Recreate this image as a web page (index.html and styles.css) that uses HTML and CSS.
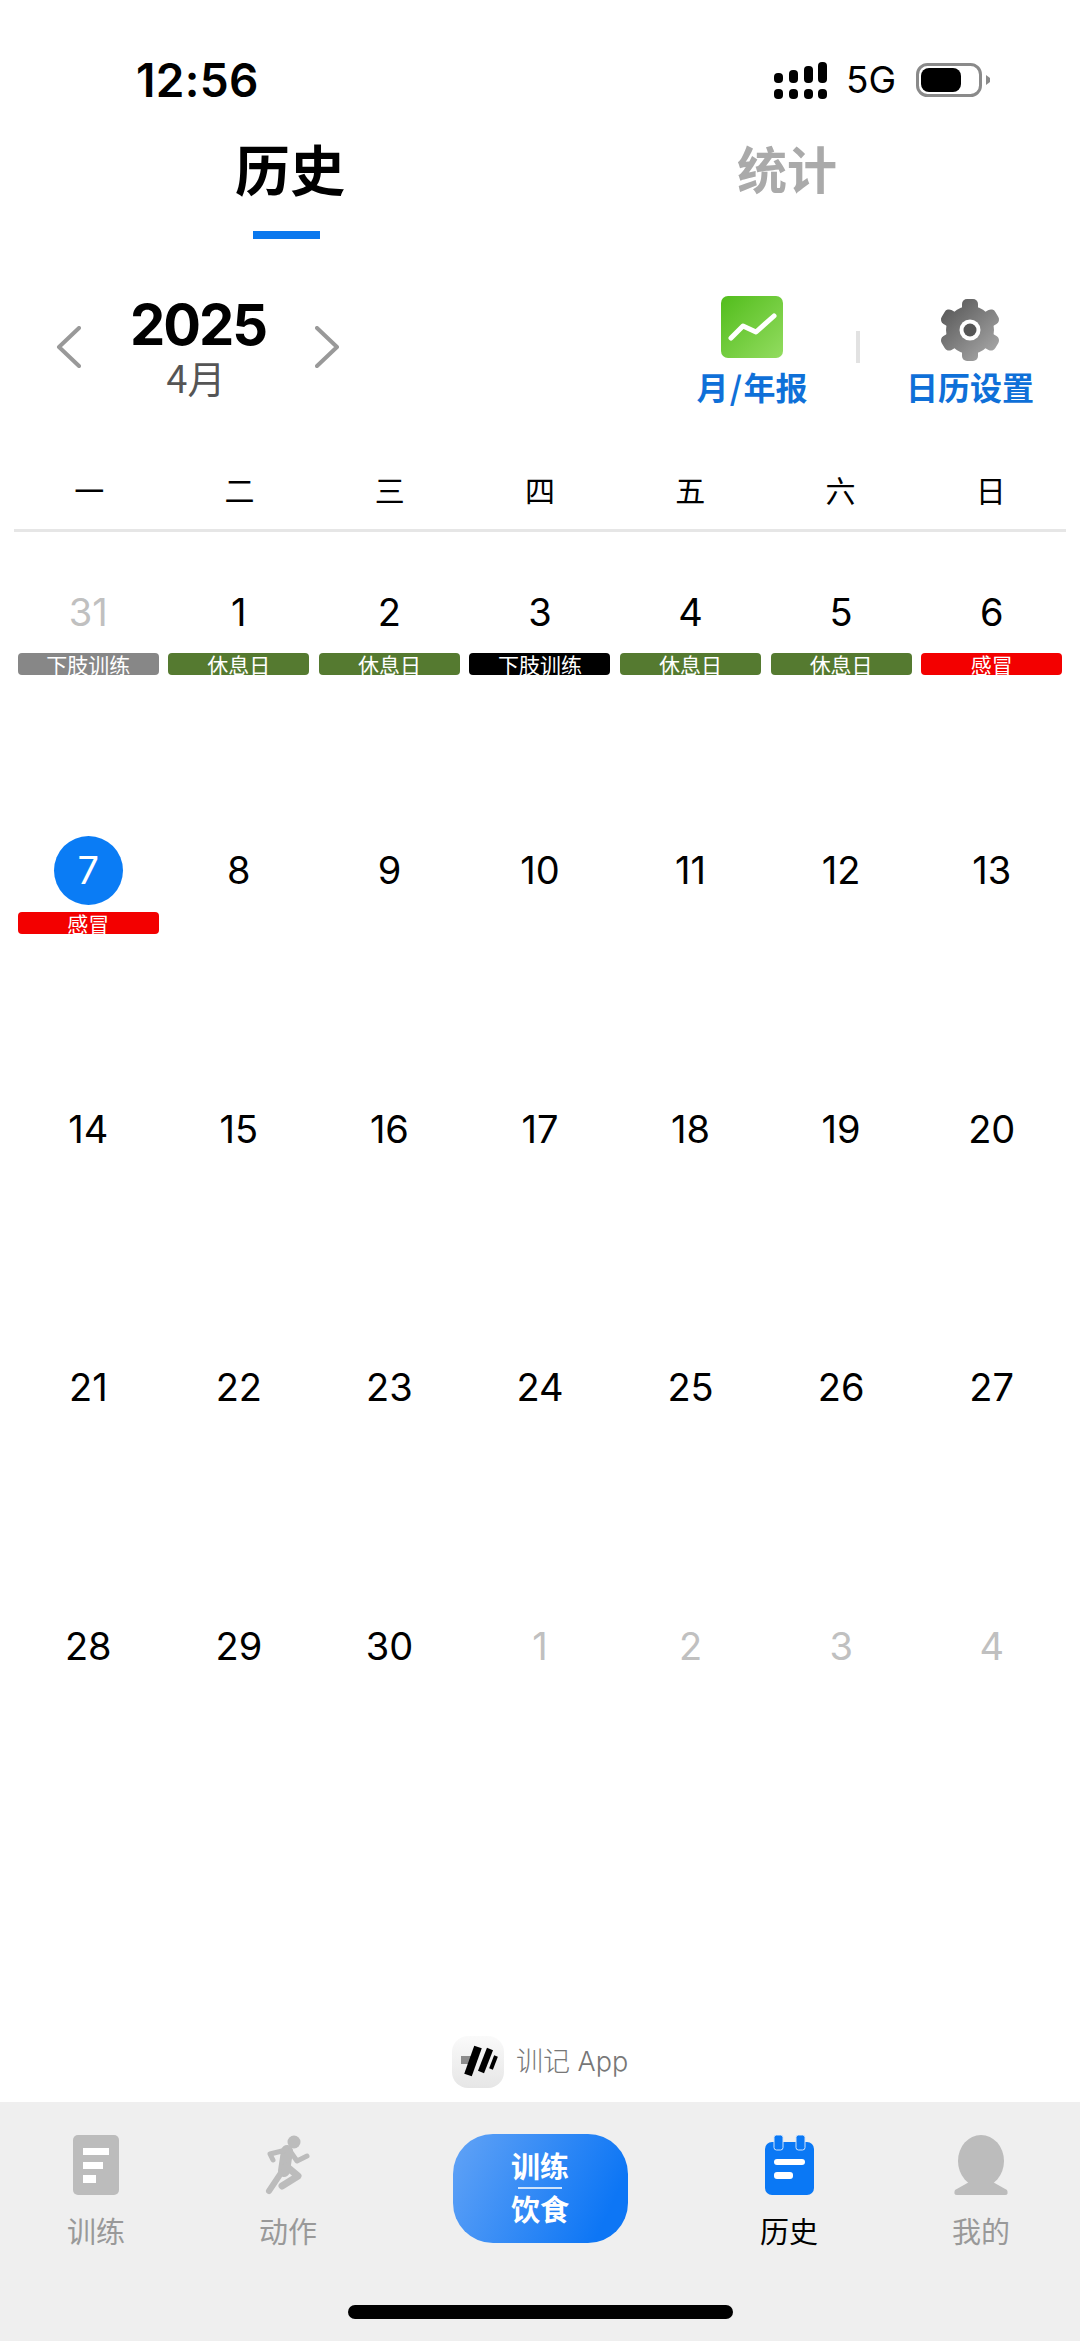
FILE: index.html
```html
<!DOCTYPE html>
<html lang="zh-CN">
<head>
<meta charset="utf-8">
<title>历史</title>
<link rel="stylesheet" href="styles.css">
</head>
<body>
<div class="app">
  <header class="status">
    <span class="time">12:56</span>
    <div class="status-right">
      <svg class="signal" width="53" height="37" viewBox="0 0 53 37" fill="#000">
        <rect x="0" y="11" width="9" height="10" rx="4"/><rect x="15" y="8" width="9" height="13" rx="4"/><rect x="30" y="4" width="9" height="17" rx="4"/><rect x="44" y="0" width="9" height="21" rx="4"/>
        <rect x="0" y="27" width="9" height="10" rx="4"/><rect x="15" y="27" width="9" height="10" rx="4"/><rect x="30" y="27" width="9" height="10" rx="4"/><rect x="44" y="27" width="9" height="10" rx="4"/>
      </svg>
      <span class="net">5G</span>
      <svg class="battery" width="74" height="34" viewBox="0 0 74 34">
        <rect x="1.5" y="1.5" width="63" height="31" rx="10" fill="#fff" stroke="#8a8a8a" stroke-width="3"/>
        <rect x="5" y="5" width="40" height="24" rx="8" fill="#000"/>
        <path d="M70 12 L74 15 V19 L70 22 Z" fill="#8a8a8a"/>
      </svg>
    </div>
  </header>

  <nav class="tabs">
    <div class="tab tab-active"><span class="tab-label">历史</span><span class="tab-line"></span></div>
    <div class="tab tab-idle"><span class="tab-label">统计</span></div>
  </nav>

  <section class="toolbar">
    <div class="month-nav">
      <svg class="chev" width="25" height="42" viewBox="0 0 25 42"><path d="M23 2 L3 21 L23 40" /></svg>
      <div class="month-label"><span class="year">2025</span><span class="month">4月</span></div>
      <svg class="chev" width="25" height="42" viewBox="0 0 25 42"><path d="M2 2 L22 21 L2 40" /></svg>
    </div>
    <div class="actions">
      <div class="action action-report">
        <svg width="62" height="62" viewBox="0 0 62 62">
          <defs><linearGradient id="g1" x1="0" y1="0" x2="1" y2="1"><stop offset="0" stop-color="#52bd1c"/><stop offset="1" stop-color="#93dc60"/></linearGradient></defs>
          <rect width="62" height="62" rx="7" fill="url(#g1)"/>
          <path d="M10 42 L22 30 L35 36 L53 20" fill="none" stroke="#fff" stroke-width="5" stroke-linecap="round" stroke-linejoin="round"/>
        </svg>
        <span class="action-text">月 / 年报</span>
      </div>
      <span class="vsep"></span>
      <div class="action action-set">
        <svg width="62" height="62" viewBox="0 0 62 62">
          <defs>
            <linearGradient id="g2" x1="0" y1="0" x2="1" y2="1"><stop offset="0" stop-color="#4f4f4f"/><stop offset="1" stop-color="#b0b0b0"/></linearGradient>
            <mask id="gear">
              <circle cx="31" cy="31" r="24" fill="#fff"/>
              <g fill="#fff">
                <rect x="23" y="0" width="16" height="62" rx="5"/>
                <rect x="23" y="0" width="16" height="62" rx="5" transform="rotate(60 31 31)"/>
                <rect x="23" y="0" width="16" height="62" rx="5" transform="rotate(120 31 31)"/>
              </g>
            </mask>
          </defs>
          <rect width="62" height="62" fill="url(#g2)" mask="url(#gear)"/>
          <circle cx="31" cy="31" r="10.5" fill="#fff"/>
          <circle cx="31" cy="31" r="6.5" fill="#555"/>
        </svg>
        <span class="action-text">日历设置</span>
      </div>
    </div>
  </section>

  <div class="weekdays">
    <span>一</span><span>二</span><span>三</span><span>四</span><span>五</span><span>六</span><span>日</span>
  </div>

  <main class="calendar">
    <div class="day"><span class="num other">31</span><span class="pill p-grey">下肢训练</span></div>
    <div class="day"><span class="num">1</span><span class="pill p-green">休息日</span></div>
    <div class="day"><span class="num">2</span><span class="pill p-green">休息日</span></div>
    <div class="day"><span class="num">3</span><span class="pill p-black">下肢训练</span></div>
    <div class="day"><span class="num">4</span><span class="pill p-green">休息日</span></div>
    <div class="day"><span class="num">5</span><span class="pill p-green">休息日</span></div>
    <div class="day"><span class="num">6</span><span class="pill p-red">感冒</span></div>

    <div class="day"><span class="num today">7</span><span class="pill p-red">感冒</span></div>
    <div class="day"><span class="num">8</span></div>
    <div class="day"><span class="num">9</span></div>
    <div class="day"><span class="num">10</span></div>
    <div class="day"><span class="num">11</span></div>
    <div class="day"><span class="num">12</span></div>
    <div class="day"><span class="num">13</span></div>

    <div class="day"><span class="num">14</span></div>
    <div class="day"><span class="num">15</span></div>
    <div class="day"><span class="num">16</span></div>
    <div class="day"><span class="num">17</span></div>
    <div class="day"><span class="num">18</span></div>
    <div class="day"><span class="num">19</span></div>
    <div class="day"><span class="num">20</span></div>

    <div class="day"><span class="num">21</span></div>
    <div class="day"><span class="num">22</span></div>
    <div class="day"><span class="num">23</span></div>
    <div class="day"><span class="num">24</span></div>
    <div class="day"><span class="num">25</span></div>
    <div class="day"><span class="num">26</span></div>
    <div class="day"><span class="num">27</span></div>

    <div class="day"><span class="num">28</span></div>
    <div class="day"><span class="num">29</span></div>
    <div class="day"><span class="num">30</span></div>
    <div class="day"><span class="num other">1</span></div>
    <div class="day"><span class="num other">2</span></div>
    <div class="day"><span class="num other">3</span></div>
    <div class="day"><span class="num other">4</span></div>
  </main>

  <div class="brand">
    <svg width="52" height="52" viewBox="0 0 52 52">
      <defs><linearGradient id="g3" x1="0" y1="0" x2="0" y2="1"><stop offset="0" stop-color="#fafafa"/><stop offset="1" stop-color="#e6e6e6"/></linearGradient></defs>
      <rect width="52" height="52" rx="16" fill="url(#g3)"/>
      <path d="M9 24 H21" stroke="#8c8c8c" stroke-width="8"/>
      <path d="M26 11 L16 39" stroke="#000" stroke-width="8"/>
      <path d="M38 13 L29 36" stroke="#000" stroke-width="6.5"/>
      <path d="M44 20 L39 33" stroke="#000" stroke-width="4"/>
    </svg>
    <span class="brand-text">训记 App</span>
  </div>

  <footer class="tabbar">
    <div class="item">
      <svg width="46" height="60" viewBox="0 0 46 60">
        <rect width="46" height="60" rx="5" fill="#bcbcbc"/>
        <rect x="10" y="13" width="26" height="7" fill="#fff"/><rect x="10" y="27" width="20" height="7" fill="#fff"/><rect x="10" y="40" width="13" height="8" fill="#fff"/>
      </svg>
      <span class="item-label">训练</span>
    </div>
    <div class="item">
      <svg width="46" height="60" viewBox="0 0 46 60">
        <circle cx="29" cy="7" r="6.5" fill="#bcbcbc"/>
        <g fill="none" stroke="#bcbcbc" stroke-linecap="round" stroke-linejoin="round">
          <path d="M22 16 L19 36" stroke-width="12"/>
          <path d="M21 15 L5 19 L8 25" stroke-width="5"/>
          <path d="M25 16 L32 26 L42 21" stroke-width="5"/>
          <path d="M16 38 L4 56" stroke-width="6"/>
          <path d="M21 31 L33 41 L17 51" stroke-width="7"/>
        </g>
      </svg>
      <span class="item-label">动作</span>
    </div>
    <div class="item item-main">
      <div class="main-btn">
        <span class="main-text">训练</span>
        <span class="main-line"></span>
        <span class="main-text">饮食</span>
      </div>
    </div>
    <div class="item">
      <svg width="49" height="60" viewBox="0 0 49 60">
        <rect y="7" width="49" height="53" rx="7" fill="#0a78f5"/>
        <rect x="9" y="0" width="9" height="15" rx="2.5" fill="#0a78f5" stroke="#cfe3fb" stroke-width="1"/>
        <rect x="31" y="0" width="9" height="15" rx="2.5" fill="#0a78f5" stroke="#cfe3fb" stroke-width="1"/>
        <rect x="9" y="24" width="31" height="6" rx="3" fill="#fff"/>
        <rect x="9" y="37" width="19" height="7" rx="3" fill="#fff"/>
      </svg>
      <span class="item-label item-active">历史</span>
    </div>
    <div class="item">
      <svg width="56" height="60" viewBox="0 0 56 60">
        <ellipse cx="28" cy="26" rx="23" ry="26" fill="#bcbcbc"/>
        <path d="M18 46 H38 L54 55 Q56 60 52 60 H4 Q0 60 2 55 Z" fill="#bcbcbc"/>
      </svg>
      <span class="item-label">我的</span>
    </div>
  </footer>
  <div class="home-bar"></div>
</div>
</body>
</html>
```

FILE: styles.css
```css
* { box-sizing: border-box; }
html, body { margin: 0; padding: 0; background: #fff; }
body { font-family: "Inter", "Noto Sans CJK SC", sans-serif; color: #000; }
.app { width: 1080px; height: 2341px; display: flex; flex-direction: column; position: relative; overflow: hidden; background: #fff; }

.status { height: 60px; margin-top: 50px; padding: 0 90px 0 136px; display: flex; align-items: center; justify-content: space-between; }
.time { font-size: 46px; font-weight: 600; line-height: 60px; letter-spacing: 0.3px; }
.status-right { display: flex; align-items: center; }
.signal { display: block; }
.net { font-size: 37px; font-weight: 400; margin-left: 19px; margin-right: 20px; line-height: 40px; }
.battery { display: block; }

.tabs { display: flex; padding: 27px 0 0 0; height: 129px; }
.tab { display: flex; flex-direction: column; align-items: center; font-family: "Noto Sans CJK SC", sans-serif; font-weight: 700; }
.tab-active { width: 580px; font-size: 55px; }
.tab-idle { width: 414px; font-size: 50px; color: #aaa; }
.tab-label { line-height: 60px; height: 60px; }
.tab-line { width: 67px; height: 8px; background: #0a78ee; margin-top: 34px; margin-right: 7px; }

.toolbar { display: flex; justify-content: space-between; align-items: flex-start; padding: 57px 46px 0 56px; height: 230px; }
.month-nav { display: flex; align-items: flex-start; }
.month-label { width: 234px; display: flex; flex-direction: column; align-items: center; }
.chev { display: block; margin-top: 30px; fill: none; stroke: #999; stroke-width: 4; stroke-linecap: round; stroke-linejoin: round; }
.year { font-size: 56px; font-weight: 700; line-height: 58px; letter-spacing: -2px; }
.month { font-family: "Noto Sans CJK SC", sans-serif; font-size: 38px; line-height: 46px; color: #555; margin-right: 4px; }
.actions { display: flex; align-items: flex-start; }
.action { display: flex; flex-direction: column; align-items: center; }
.action svg { display: block; }
.action-text { font-family: "Noto Sans CJK SC", sans-serif; font-size: 32px; font-weight: 700; color: #0f70d8; line-height: 46px; margin-top: 5px; white-space: nowrap; }
.action-report { width: 112px; }
.action-report .action-text { word-spacing: -6px; }
.action-set { width: 128px; }
.action-set svg { margin-top: 3px; margin-bottom: -3px; }
.vsep { width: 4px; height: 32px; background: #e2e2e2; margin: 35px 46px 0 48px; }

.weekdays { margin: 0 14px; display: grid; grid-template-columns: repeat(7, 1fr); height: 63px; border-bottom: 3px solid #e6e6e6; font-family: "Noto Sans CJK SC", sans-serif; font-size: 30px; line-height: 41px; text-align: center; }

.calendar { margin: 45px 13px 0; display: grid; grid-template-columns: repeat(7, 1fr); grid-auto-rows: 258.5px; }
.day { display: flex; flex-direction: column; align-items: center; }
.num { width: 69px; height: 69px; display: flex; align-items: center; justify-content: center; font-size: 38px; font-weight: 400; border-radius: 50%; }
.other { color: #c0c0c0; }
.today { background: #0a7cf5; color: #fff; }
.pill { width: 141px; height: 22px; margin-top: 7px; border-radius: 4px; color: #fff; font-family: "Noto Sans CJK SC", sans-serif; font-size: 21px; line-height: 22px; text-align: center; font-weight: 400; }
.p-grey { background: #878787; }
.p-green { background: #557a30; }
.p-black { background: #000; }
.p-red { background: #f30000; }

.brand { margin-top: auto; height: 52px; margin-bottom: 14px; padding-left: 452px; display: flex; align-items: center; gap: 12px; }
.brand svg { display: block; }
.brand-text { font-size: 27px; color: #777; line-height: 40px; font-weight: 300; }

.tabbar { height: 239px; background: #efefef; display: grid; grid-template-columns: 192px 192px 312px 186px 198px; padding-top: 33px; align-items: start; }
.item { display: flex; flex-direction: column; align-items: center; }
.item svg { display: block; }
.item-label { font-family: "Noto Sans CJK SC", sans-serif; font-size: 29px; line-height: 36px; margin-top: 17px; color: #999; }
.item-active { color: #000; }
.main-btn { width: 175px; height: 109px; margin-top: -1px; border-radius: 40px; background: linear-gradient(115deg, #62a3f6 0%, #0d76f5 85%); display: flex; flex-direction: column; align-items: center; color: #fff; }
.main-text { font-family: "Noto Sans CJK SC", sans-serif; font-weight: 700; font-size: 29px; line-height: 36px; }
.main-text:first-child { margin-top: 13px; }
.main-line { width: 44px; height: 2px; background: #cfe3fb; margin: 4px 0 1px; }

.home-bar { position: absolute; left: 348px; top: 2305px; width: 385px; height: 14px; border-radius: 7px; background: #000; }
```
